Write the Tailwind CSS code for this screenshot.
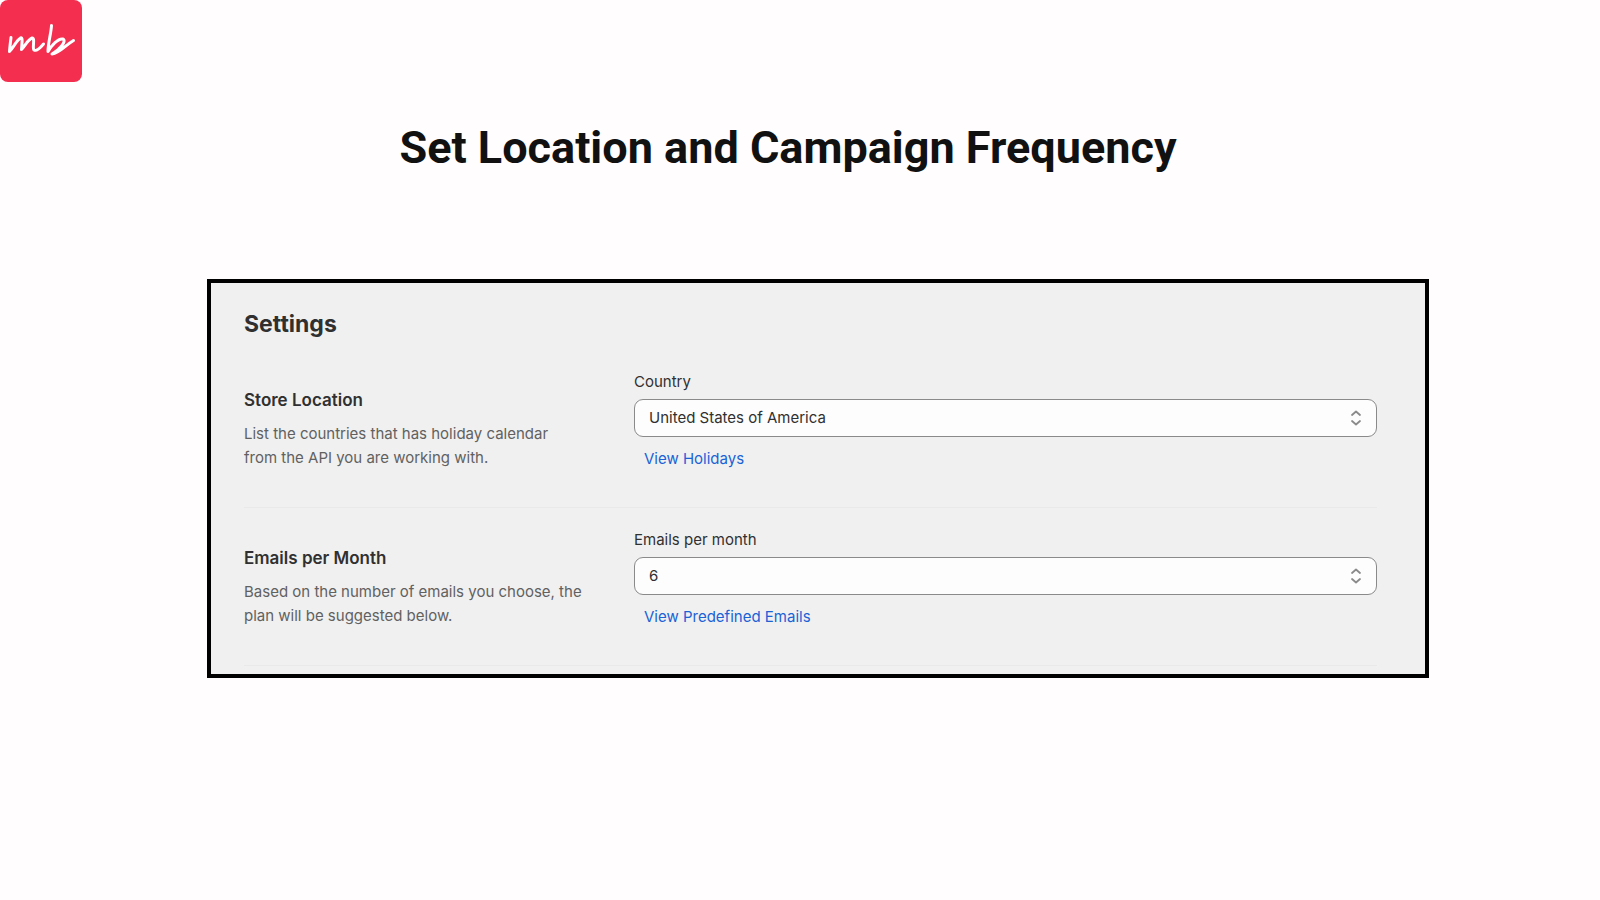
<!DOCTYPE html>
<html lang="en">
<head>
<meta charset="utf-8">
<meta name="viewport" content="width=device-width, initial-scale=1">
<title>Set Location and Campaign Frequency</title>
<script src="https://cdn.jsdelivr.net/npm/@tailwindcss/browser@4"></script>
</head>
<body class="min-h-screen bg-[#fffdfe] font-['Inter',sans-serif] text-[#303030]">
<header>
  <svg class="size-[82px]" viewBox="0 0 82 82" role="img" aria-label="mb logo">
    <rect width="82" height="82" rx="8" fill="#f32e4f"/>
    <g fill="none" stroke="#fff" stroke-width="3" stroke-linecap="round" stroke-linejoin="round">
      <path d="M11 37.500C10.500 42 9.800 47 9.500 51.500C13 48 16.500 40.500 20.500 38C23 37 22 43 21.500 49.500C25 46 28 39.500 32 38C35.500 37.500 32 48 34 50C36.500 51.500 41 47 43.500 44"/>
      <path d="M51.500 25.500C51 34 48 43 48 51.500C51 46 58 38 63 39C67 41.500 59 50 52 54C60 53 65 45.500 73.500 40.500"/>
    </g>
  </svg>
</header>
<main class="pr-[171px] pl-[207px]">
  <h1 class="mt-[39px] mr-[30px] -ml-[30px] text-center font-['Roboto',sans-serif] text-[45px] leading-[54px] font-bold text-[#111111]">Set Location and Campaign Frequency</h1>
  <section class="mt-[104px] border-4 border-black bg-[#f0f0f0] pt-[25px] pr-[48px] pb-[8px] pl-[33px]">
    <h2 class="text-[23px] leading-8 font-bold">Settings</h2>
    <div class="grid grid-cols-[351px_minmax(0,1fr)] gap-x-[39px] border-b border-[#e9e9e9] pt-[32px] pb-[36px]">
      <div class="pt-[16px]">
        <h3 class="text-[17px] leading-6 font-semibold">Store Location</h3>
        <p class="mt-[10px] text-[15px] leading-6 text-[#616161]">List the countries that has holiday calendar<br>from the API you are working with.</p>
      </div>
      <div>
        <label for="country" class="block text-[15px] leading-5">Country</label>
        <div class="relative mt-[7px]">
          <select id="country" class="block h-[38px] w-full appearance-none rounded-[9px] border border-[#8a8a8a] bg-[#fdfdfd] px-[14px] text-[15px]"><option>United States of America</option></select>
          <svg class="pointer-events-none absolute top-[11px] right-[15px] h-4 w-3" viewBox="0 0 12 16" fill="none" stroke="#8a8a8a" stroke-width="1.800" stroke-linecap="round" stroke-linejoin="round"><path d="M2 5L6 1.500L10 5M2 11L6 14.500L10 11"/></svg>
        </div>
        <a href="#" class="mt-[10px] ml-[10px] inline-block text-[15px] leading-6 text-[#1a62d6]">View Holidays</a>
      </div>
    </div>
    <div class="grid grid-cols-[351px_minmax(0,1fr)] gap-x-[39px] border-b border-[#e9e9e9] pt-[22px] pb-[36px]">
      <div class="pt-[16px]">
        <h3 class="text-[17px] leading-6 font-semibold">Emails per Month</h3>
        <p class="mt-[10px] text-[15px] leading-6 text-[#616161]">Based on the number of emails you choose, the<br>plan will be suggested below.</p>
      </div>
      <div>
        <label for="emails" class="block text-[15px] leading-5">Emails per month</label>
        <div class="relative mt-[7px]">
          <select id="emails" class="block h-[38px] w-full appearance-none rounded-[9px] border border-[#8a8a8a] bg-[#fdfdfd] px-[14px] text-[15px]"><option>6</option></select>
          <svg class="pointer-events-none absolute top-[11px] right-[15px] h-4 w-3" viewBox="0 0 12 16" fill="none" stroke="#8a8a8a" stroke-width="1.800" stroke-linecap="round" stroke-linejoin="round"><path d="M2 5L6 1.500L10 5M2 11L6 14.500L10 11"/></svg>
        </div>
        <a href="#" class="mt-[10px] ml-[10px] inline-block text-[15px] leading-6 text-[#1a62d6]">View Predefined Emails</a>
      </div>
    </div>
  </section>
</main>
</body>
</html>
